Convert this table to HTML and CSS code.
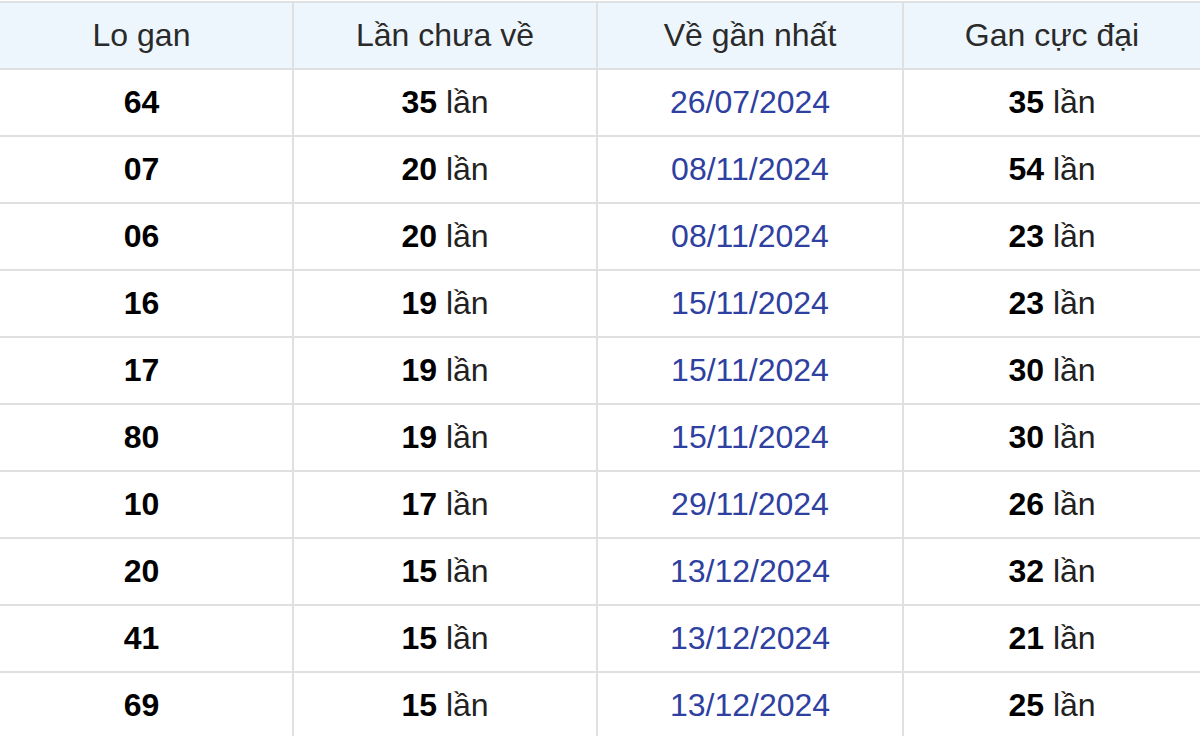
FILE: index.html
```html
<!DOCTYPE html>
<html lang="vi">
<head>
<meta charset="utf-8">
<link rel="stylesheet" href="styles.css">
</head>
<body>
<table class="gan">
  <colgroup>
    <col class="c1"><col class="c2"><col class="c3"><col class="c4">
  </colgroup>
  <thead>
    <tr><th>Lo gan</th><th>Lần chưa về</th><th>Về gần nhất</th><th>Gan cực đại</th></tr>
  </thead>
  <tbody>
    <tr><td><b>64</b></td><td><b>35</b> lần</td><td class="date">26/07/2024</td><td><b>35</b> lần</td></tr>
    <tr><td><b>07</b></td><td><b>20</b> lần</td><td class="date">08/11/2024</td><td><b>54</b> lần</td></tr>
    <tr><td><b>06</b></td><td><b>20</b> lần</td><td class="date">08/11/2024</td><td><b>23</b> lần</td></tr>
    <tr><td><b>16</b></td><td><b>19</b> lần</td><td class="date">15/11/2024</td><td><b>23</b> lần</td></tr>
    <tr><td><b>17</b></td><td><b>19</b> lần</td><td class="date">15/11/2024</td><td><b>30</b> lần</td></tr>
    <tr><td><b>80</b></td><td><b>19</b> lần</td><td class="date">15/11/2024</td><td><b>30</b> lần</td></tr>
    <tr><td><b>10</b></td><td><b>17</b> lần</td><td class="date">29/11/2024</td><td><b>26</b> lần</td></tr>
    <tr><td><b>20</b></td><td><b>15</b> lần</td><td class="date">13/12/2024</td><td><b>32</b> lần</td></tr>
    <tr><td><b>41</b></td><td><b>15</b> lần</td><td class="date">13/12/2024</td><td><b>21</b> lần</td></tr>
    <tr><td><b>69</b></td><td><b>15</b> lần</td><td class="date">13/12/2024</td><td><b>25</b> lần</td></tr>
  </tbody>
</table>
</body>
</html>
```
FILE: styles.css
```css
html, body {
  margin: 0;
  padding: 0;
  background: #fff;
  overflow: hidden;
}
.gan {
  width: 1209px;
  margin-left: -9px;
  margin-top: 1px;
  border-collapse: collapse;
  table-layout: fixed;
  font-family: "Liberation Sans", Arial, sans-serif;
  font-size: 32px;
  color: #111;
}
.c1 { width: 302px; }
.c2 { width: 304px; }
.c3 { width: 306px; }
.c4 { width: 297px; }
.gan th, .gan td {
  border: 2px solid #e0e0e0;
  text-align: center;
  vertical-align: middle;
  padding: 0;
}
.gan tr > :first-child { border-left: none; }
.gan tr > :last-child { border-right: none; }
.gan th {
  height: 65px;
  background: #eef6fd;
  font-weight: normal;
  color: #2a2a2a;
}
.gan td {
  height: 65px;
  color: #222;
}
.gan b { font-weight: bold; color: #000; }
.gan td.date { color: #2e40a0; }
```
